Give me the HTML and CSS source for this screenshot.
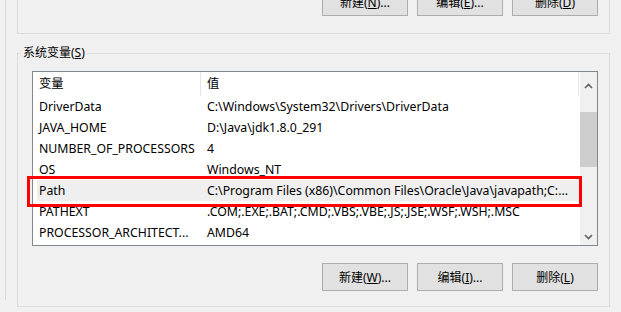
FILE: index.html
```html
<!DOCTYPE html>
<html lang="zh-CN">
<head>
<meta charset="UTF-8" />
<title>环境变量</title>
<link rel="stylesheet" href="styles.css">
</head>
<body>
  <div class="tab">
    <!-- 用户变量 (只露出底部) -->
    <div class="group group-user">
      <div class="btn-row btn-row-top">
        <button class="btn">新建(<u>N</u>)...</button>
        <button class="btn">编辑(<u>E</u>)...</button>
        <button class="btn">删除(<u>D</u>)</button>
      </div>
    </div>

    <!-- 系统变量 -->
    <fieldset class="group group-sys">
      <legend>系统变量(<u>S</u>)</legend>
      <div class="listbox">
        <div class="list">
          <div class="list-head">
            <div class="head-name">变量</div>
            <div class="head-value">值</div>
          </div>
          <div class="row"><div class="cell-name">DriverData</div><div class="cell-value">C:\Windows\System32\Drivers\DriverData</div></div>
          <div class="row"><div class="cell-name">JAVA_HOME</div><div class="cell-value">D:\Java\jdk1.8.0_291</div></div>
          <div class="row"><div class="cell-name">NUMBER_OF_PROCESSORS</div><div class="cell-value">4</div></div>
          <div class="row"><div class="cell-name">OS</div><div class="cell-value">Windows_NT</div></div>
          <div class="row selected"><div class="cell-name">Path</div><div class="cell-value">C:\Program Files (x86)\Common Files\Oracle\Java\javapath;C:...</div></div>
          <div class="row"><div class="cell-name">PATHEXT</div><div class="cell-value">.COM;.EXE;.BAT;.CMD;.VBS;.VBE;.JS;.JSE;.WSF;.WSH;.MSC</div></div>
          <div class="row"><div class="cell-name">PROCESSOR_ARCHITECT...</div><div class="cell-value">AMD64</div></div>
        </div>
        <div class="scrollbar">
          <div class="sb-btn sb-up">
            <svg width="9" height="6" viewBox="0 0 9 6"><path d="M1 5 L4.5 1.5 L8 5" fill="none" stroke="#606060" stroke-width="1.6"/></svg>
          </div>
          <div class="sb-track"><div class="sb-thumb"></div></div>
          <div class="sb-btn sb-down">
            <svg width="9" height="6" viewBox="0 0 9 6"><path d="M1 1 L4.5 4.5 L8 1" fill="none" stroke="#606060" stroke-width="1.6"/></svg>
          </div>
        </div>
        <!-- 红色标注框 -->
        <div class="mark"></div>
      </div>
      <div class="btn-row btn-row-bottom">
        <button class="btn">新建(<u>W</u>)...</button>
        <button class="btn">编辑(<u>I</u>)...</button>
        <button class="btn">删除(<u>L</u>)</button>
      </div>
    </fieldset>
  </div>
</body>
</html>
```

FILE: styles.css
```css
/* ========== Global ========== */
html, body {
  margin: 0;
  height: 100%;
  overflow: hidden;
}
body {
  background: #f0f0f0;
  color: #000;
  font-family: "Noto Sans", "Noto Sans CJK SC", sans-serif;
  font-size: 12px;
}
/* Page de l'onglet */
.tab {
  margin-left: 5px;
  height: 312px;
  border-left: 1px solid #d9d9d9;
  padding-left: 11px;
  box-sizing: border-box;
}
.group {
  width: 593px;
  box-sizing: border-box;
  border: 1px solid #dcdcdc;
}
/* Groupe du haut */
.group-user {
  border-top: none;
  padding: 0 11px 17px 0;
}
/* Boutons */
.btn-row {
  display: flex;
  justify-content: flex-end;
  gap: 9px;
}
.btn-row-top {
  margin-top: -12px;
}
.btn-row-bottom {
  margin-top: 17px;
}
.btn {
  width: 86px;
  height: 28px;
  padding: 0;
  border: 1px solid #adadad;
  background: #e1e1e1;
  color: #000;
  font: inherit;
}
/* Groupe systeme */
.group-sys {
  margin: 11px 0 0 0;
  padding: 0 11px 15px 14px;
  min-width: 0;
}
.group-sys legend {
  margin-left: -11px;
  padding: 0 2px;
  line-height: 16px;
}
/* Liste */
.listbox {
  position: relative;
  display: flex;
  height: 175px;
  margin-top: 10px;
  box-sizing: border-box;
  border: 1px solid #828790;
  background: #fff;
}
.list {
  flex: 1;
  overflow: hidden;
  font-size: 12.3px;
}
.list-head {
  display: flex;
  height: 24px;
  line-height: 24px;
}
.head-name {
  width: 161px;
  padding-left: 6px;
  border-right: 1px solid #e5e5e5;
}
.head-value {
  width: 371px;
  padding-left: 6px;
  border-right: 1px solid #e5e5e5;
}
.row {
  display: flex;
  height: 21px;
  line-height: 21px;
  margin-left: 4px;
  white-space: nowrap;
}
.row.selected {
  background: #efefef;
}
.cell-name {
  width: 162px;
  padding-left: 2px;
  overflow: hidden;
}
.cell-value {
  flex: 1;
  padding-left: 6px;
  overflow: hidden;
}
/* Barre de defilement */
.scrollbar {
  width: 17px;
  display: flex;
  flex-direction: column;
  background: #f0f0f0;
}
.sb-btn {
  height: 17px;
  display: flex;
  justify-content: center;
}
.sb-up {
  align-items: flex-end;
}
.sb-down {
  align-items: center;
}
.sb-track {
  flex: 1;
}
.sb-thumb {
  margin-top: 23px;
  height: 55px;
  background: #cdcdcd;
}
/* Cadre rouge */
.mark {
  position: absolute;
  left: -6px;
  top: 104px;
  width: 555px;
  height: 31px;
  box-sizing: border-box;
  border: 3px solid #f00;
}
```
